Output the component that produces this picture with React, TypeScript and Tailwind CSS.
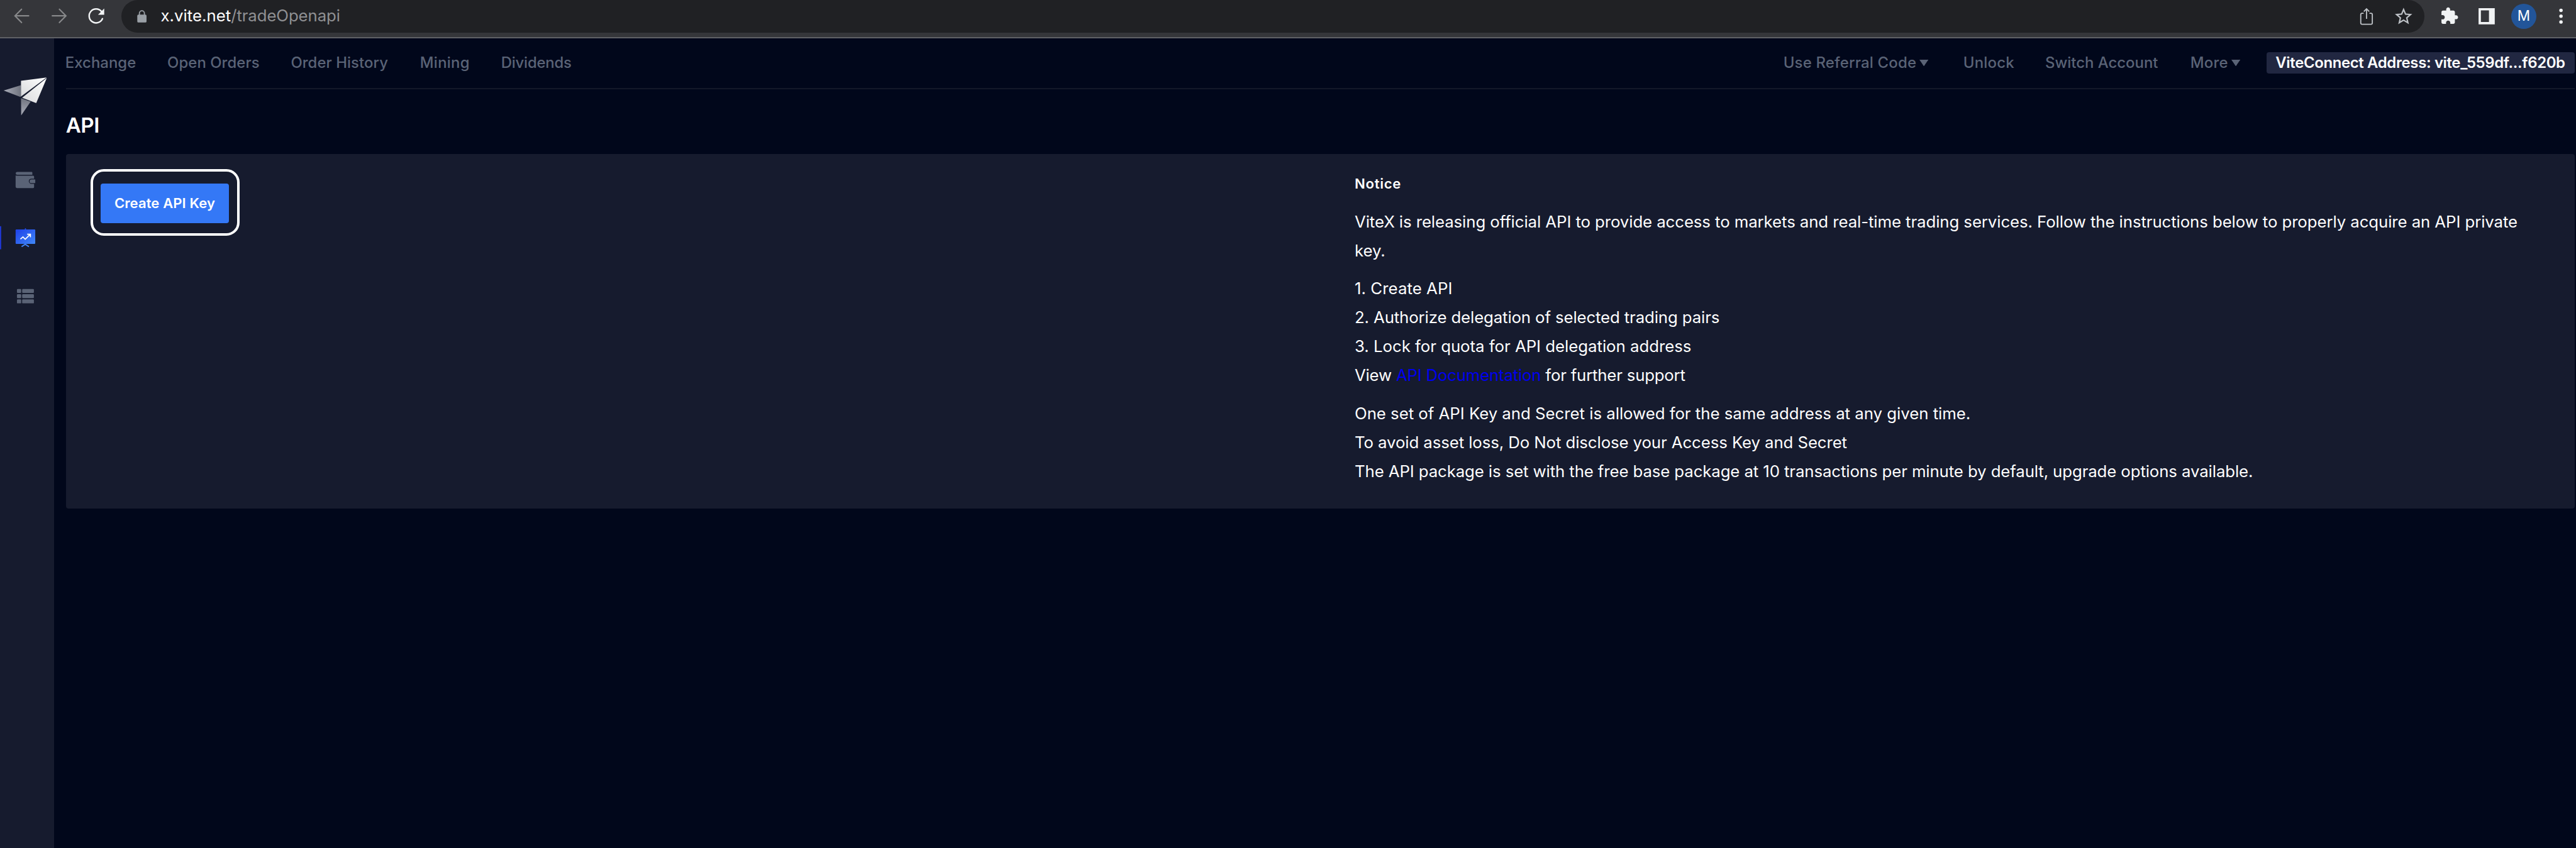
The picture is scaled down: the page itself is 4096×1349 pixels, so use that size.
import type { ReactNode } from "react";

const muted = "#5a6376";

function Logo() {
  return (
    <svg viewBox="0 90 282 220" className="h-[67.4px] w-[86.4px]">
      <defs>
        <linearGradient id="wing" x1="0" y1="0" x2="1" y2="0">
          <stop offset="0" stopColor="#a9acb8" /><stop offset="1" stopColor="#70747f" />
        </linearGradient>
        <linearGradient id="tail" x1="0" y1="0" x2="0" y2="1">
          <stop offset="0" stopColor="#70747f" /><stop offset="1" stopColor="#a9acb8" />
        </linearGradient>
        <linearGradient id="body" x1="0" y1="1" x2="1" y2="0">
          <stop offset="0" stopColor="#d9dadc" /><stop offset="1" stopColor="#ffffff" />
        </linearGradient>
      </defs>
      <path d="M19 168L109 141V199L104 201Z" fill="url(#wing)" />
      <path d="M109 208L159 226L110 297Z" fill="url(#tail)" />
      <path d="M109 118L242 101L109 199Z" fill="url(#body)" />
      <path d="M243 103L188 234L115 206Z" fill="url(#body)" />
    </svg>
  );
}

function Sidebar() {
  return (
    <aside className="flex w-[86.4px] shrink-0 flex-col bg-[#161b2e] pt-[58.5px]">
      <Logo />
      <svg viewBox="0 570 282 130" className="mt-[79.7px] h-[39.8px] w-[86.4px]" fill={muted}>
        <path d="M89 591H164Q168 591 168 595V606H89A7.5 7.5 0 0 1 89 591Z" />
        <path d="M81 609Q84 611 89 611H172Q177 611 177 616V626H163A13 13 0 0 0 163 653H177V670Q177 675 172 675H88Q81 675 81 668Z" />
        <path d="M163 630.5H183V649.5H163A9.5 9.5 0 0 1 163 630.5Z" />
      </svg>
      <svg viewBox="0 870 282 130" className="mt-[52.1px] h-[39.8px] w-[86.4px]">
        <defs>
          <linearGradient id="board" x1="0" y1="0" x2="1" y2="1">
            <stop offset="0.1" stopColor="#2147ea" /><stop offset="1" stopColor="#4088f7" />
          </linearGradient>
        </defs>
        <rect x="0" y="876" width="6" height="120" fill="#2039d8" />
        <rect x="129" y="886" width="6" height="10" rx="3" fill="#2147ea" />
        <rect x="81" y="893" width="102" height="75" rx="4" fill="url(#board)" />
        <path d="M106 943L119 932L131 944L154 921M141 918H158V934" fill="none" stroke="#fff" strokeWidth="5.5" />
        <path d="M145 916H160V932Z" fill="#fff" />
        <path d="M112 982L131 970L150 982" fill="none" stroke="#3f83f7" strokeWidth="6.5" />
      </svg>
      <svg viewBox="0 1175 282 130" className="mt-[53.6px] h-[39.8px] w-[86.4px]" fill={muted}>
        {[1200, 1227, 1254].map((y) => (
          <g key={y}>
            <rect x="88" y={y} width="22" height="21" rx="4" />
            <rect x="115" y={y} width="61" height="21" rx="4" />
          </g>
        ))}
      </svg>
    </aside>
  );
}

function BrowserBar() {
  return (
    <header className="flex h-[61px] shrink-0 items-start border-b-2 border-[#5f6165] bg-[#35363a]">
      <svg viewBox="60 0 110 168" className="ml-[18.4px] h-[51.5px] w-[33.7px]" fill="none" stroke="#87888a" strokeWidth="7" strokeLinecap="round">
        <path d="M150 82H80M113 48L79 82L113 117" />
      </svg>
      <svg viewBox="250 0 110 168" className="ml-[24.5px] h-[51.5px] w-[33.7px]" fill="none" stroke="#87888a" strokeWidth="7" strokeLinecap="round">
        <path d="M270 82H341M307 48L341 82L307 117" />
      </svg>
      <svg viewBox="440 0 120 168" className="ml-[24.5px] h-[51.5px] w-[36.8px]">
        <path d="M526 60A36 36 0 1 0 531 97" fill="none" stroke="#f1f3f4" strokeWidth="8" strokeLinecap="round" />
        <path d="M540 44V77H508Z" fill="#f1f3f4" />
      </svg>
      <div className="ml-[21.4px] flex h-[51.5px] w-[3662px] items-center rounded-full bg-[#202124] pl-[21.4px] pr-[16.5px]">
        <svg viewBox="700 0 80 168" className="h-[51.5px] w-[24.5px]">
          <path d="M725 78V69A13 13 0 0 1 751 69V78" fill="none" stroke="#9aa0a6" strokeWidth="6" />
          <rect x="714" y="76" width="48" height="41" rx="6" fill="#9aa0a6" />
        </svg>
        <div className="ml-[16.7px] whitespace-nowrap text-[25.74px] text-[#8f9093]">
          <span className="tracking-[0.0012em] text-white">x.vite.net</span>
          <span className="tracking-[-0.0032em]">/tradeOpenapi</span>
        </div>
        <svg viewBox="50 0 105 168" className="ml-auto h-[51.5px] w-[32.2px]" fill="none" stroke="#bdc1c6" strokeWidth="6">
          <path d="M102 98V48M88 60L102 46L116 60M87 69H79Q72 69 72 76V119Q72 126 79 126H125Q132 126 132 119V76Q132 69 125 69H117" />
        </svg>
        <svg viewBox="238 0 110 168" className="ml-[25.4px] h-[51.5px] w-[33.7px]" fill="#bdc1c6">
          <path transform="translate(239 31) scale(4.5)" d="M22 9.24l-7.19-.62L12 2 9.19 8.63 2 9.24l5.46 4.73L5.82 21 12 17.27 18.18 21l-1.63-7.03L22 9.24zM12 15.4l-3.76 2.27 1-4.28-3.32-2.88 4.38-.38L12 6.1l1.71 4.04 4.38.38-3.32 2.88 1 4.28L12 15.4z" />
        </svg>
      </div>
      <svg viewBox="482 0 108 168" className="ml-[24.5px] h-[51.5px] w-[33.1px]" fill="#f1f3f4">
        <path transform="translate(483.8 34) scale(4.1)" d="M20.5 11H19V7c0-1.1-.9-2-2-2h-4V3.5C13 2.12 11.88 1 10.5 1S8 2.12 8 3.5V5H4c-1.1 0-1.99.9-1.99 2v3.8H3.5c1.49 0 2.7 1.21 2.7 2.7s-1.21 2.7-2.7 2.7H2V20c0 1.1.9 2 2 2h3.8v-1.5c0-1.49 1.21-2.7 2.7-2.7 1.49 0 2.7 1.21 2.7 2.7V22H17c1.1 0 2-.9 2-2v-4h1.5c1.38 0 2.5-1.12 2.5-2.5S21.88 11 20.5 11z" />
      </svg>
      <svg viewBox="674 0 104 168" className="ml-[25.7px] h-[51.5px] w-[31.9px]" fill="#f1f3f4">
        <path fillRule="evenodd" d="M684 42H768V126H684ZM696 54V114H738V54Z" />
      </svg>
      <div className="ml-[22.7px] mt-[5.5px] flex size-[40.45px] items-center justify-center rounded-full bg-[#225599] text-[22.5px] leading-none text-white">
        M
      </div>
      <svg viewBox="1090 0 40 168" className="ml-[32.5px] h-[51.5px] w-[12.3px]" fill="#f1f3f4">
        <circle cx="1110" cy="54" r="9" /><circle cx="1110" cy="84" r="9" /><circle cx="1110" cy="114" r="9" />
      </svg>
    </header>
  );
}

function Caret() {
  return (
    <svg viewBox="0 0 15 11" className="ml-[5px] h-[10.4px] w-[14.2px]" fill={muted}>
      <path d="M0 0H15L7.5 11Z" />
    </svg>
  );
}

function Nav() {
  return (
    <nav className="flex h-[80.5px] items-center justify-between whitespace-nowrap border-b-2 border-[#131829] text-[23.9px] font-medium text-[#5a6376]">
      <div className="-ml-[1px] flex">
        <div className="w-[162.3px] tracking-[0.0019em]">Exchange</div>
        <div className="w-[196.3px] tracking-[0.0026em]">Open Orders</div>
        <div className="w-[205.4px] tracking-[0.0022em]">Order History</div>
        <div className="w-[128.9px] tracking-[0.0115em]">Mining</div>
        <div className="tracking-[-0.0079em]">Dividends</div>
      </div>
      <div className="flex items-center">
        <div className="flex w-[286px] items-center tracking-[0.0085em]">Use Referral Code<Caret /></div>
        <div className="w-[130.3px] tracking-[0.0097em]">Unlock</div>
        <div className="w-[230.8px] tracking-[0.0002em]">Switch Account</div>
        <div className="flex w-[121.2px] items-center tracking-[0.008em]">More<Caret /></div>
        <div className="flex h-[34px] w-[490.2px] items-center rounded-[4px] bg-[#212741] pl-[14.3px] font-semibold tracking-[-0.0141em] text-white">
          ViteConnect Address: vite_559df...f620b
        </div>
      </div>
    </nav>
  );
}

function Line({ children, className = "" }: { children: ReactNode; className?: string }) {
  return <p className={"h-[45.96px] whitespace-nowrap leading-[45.96px] " + className}>{children}</p>;
}

function Panel() {
  return (
    <section className="mt-[28px] flex h-[564.4px] rounded-[4px] bg-[#161b2e]">
      <div className="w-1/2 pl-[39.5px] pt-[24.8px]">
        <div className="h-[105.7px] w-[237.2px] rounded-[21px] border-4 border-white pl-[11.6px] pt-[19px]">
          <button className="flex h-[62.5px] w-[204.1px] items-center justify-center rounded-[4px] bg-[#3478f6] text-[22.06px] font-semibold tracking-[0.0043em] text-white">
            Create API Key
          </button>
        </div>
      </div>
      <div className="w-1/2 pl-[54.5px] pt-[33.2px] text-[25.74px] text-white">
        <h2 className="h-[29.4px] text-[22.06px] font-semibold leading-[29.4px] tracking-[0.0344em]">Notice</h2>
        <div className="mt-[22.5px]">
          <Line className="tracking-[-0.0024em]">
            ViteX is releasing official API to provide access to markets and real-time trading services. Follow the instructions below to properly acquire an API private
          </Line>
          <Line>key.</Line>
        </div>
        <div className="mt-[14.7px]">
          <Line className="tracking-[0.003em]">1. Create API</Line>
          <Line className="tracking-[-0.0039em]">2. Authorize delegation of selected trading pairs</Line>
          <Line>3. Lock for quota for API delegation address</Line>
          <Line className="tracking-[-0.0068em]">
            View <a className="text-[#0000ee]">API Documentation</a> for further support
          </Line>
        </div>
        <div className="mt-[14.7px]">
          <Line>One set of API Key and Secret is allowed for the same address at any given time.</Line>
          <Line className="tracking-[-0.0027em]">To avoid asset loss, Do Not disclose your Access Key and Secret</Line>
          <Line className="tracking-[-0.0032em]">
            The API package is set with the free base package at 10 transactions per minute by default, upgrade options available.
          </Line>
        </div>
      </div>
    </section>
  );
}

export default function App() {
  return (
    <div className="flex h-[1349px] w-[4096px] flex-col overflow-hidden bg-[#01071b] font-['Inter',sans-serif]">
      <BrowserBar />
      <div className="flex flex-1">
        <Sidebar />
        <main className="flex-1 pl-[18.4px] pr-[1.8px]">
          <Nav />
          <h1 className="mt-[39px] h-[36px] text-[33.1px] font-semibold leading-[36px] tracking-[-0.0156em] text-white">API</h1>
          <Panel />
        </main>
      </div>
    </div>
  );
}
